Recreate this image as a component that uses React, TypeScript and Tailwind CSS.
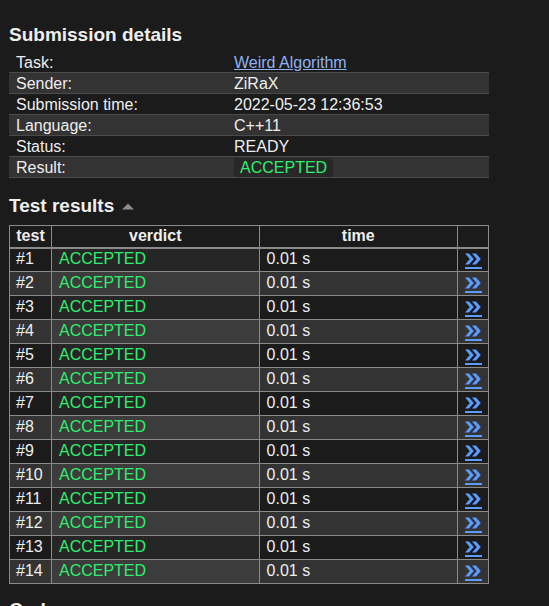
import React from 'react';

const info: [string, React.ReactNode][] = [
  ['Task:', <a href="#" className="text-[#8fb3f0] underline">Weird Algorithm</a>],
  ['Sender:', 'ZiRaX'],
  ['Submission time:', '2022-05-23 12:36:53'],
  ['Language:', 'C++11'],
  ['Status:', 'READY'],
  ['Result:', <span className="rounded-[3px] bg-[#282828] px-[6px] py-[1px] text-[#2fee6f]">ACCEPTED</span>],
];

function Chevrons() {
  return (
    <a href="#" className="inline-flex flex-col items-center">
      <svg width="16" height="14" viewBox="0 0 16 14" fill="#5b9bff">
        <path d="M0 1.5 L4 1.5 L8.8 7 L4 12.5 L0 12.5 L4.8 7 Z" />
        <path d="M7 1.5 L11 1.5 L15.8 7 L11 12.5 L7 12.5 L11.8 7 Z" />
      </svg>
      <span className="mt-[1px] block h-[2px] w-[17px] bg-[#5b9bff]" />
    </a>
  );
}

export default function App() {
  const rows = Array.from({ length: 14 }, (_, i) => i + 1);
  return (
    <div className="min-h-screen bg-[#1b1b1b] px-[9px] font-['Liberation_Sans',Arial,sans-serif] text-[16px] text-[#eeeeee]">
      <h2 className="pt-[23px] text-[19px] leading-[24px] font-bold">Submission details</h2>
      <div className="mt-[5px] w-[480px]">
        {info.map(([k, v], i) => (
          <div
            key={k}
            className={`flex h-[21px] items-center border-b border-[#4a4a4a] pt-[1px] leading-[18px] ${i % 2 ? 'bg-[#333333]' : ''}`}
          >
            <div className="w-[225px] pl-[7px]">{k}</div>
            <div>{v}</div>
          </div>
        ))}
      </div>

      <h2 className="mt-[16px] flex items-center text-[19px] leading-[24px] font-bold">
        Test results
        <svg className="ml-[8px]" width="12" height="7" viewBox="0 0 12 7">
          <path d="M0 6.5 L6 0.5 L12 6.5 Z" fill="#8a8a8a" />
        </svg>
      </h2>

      <table className="mt-[7px] w-[480px] border-collapse border border-[#8a8a8a] leading-[18px]">
        <thead>
          <tr className="h-[22px] border-b-2 border-[#8a8a8a] font-bold">
            <th className="w-[42px] border border-[#8a8a8a] pb-[1px] text-center">test</th>
            <th className="w-[208px] border border-[#8a8a8a] pb-[1px] text-center">verdict</th>
            <th className="w-[199px] border border-[#8a8a8a] pb-[1px] text-center">time</th>
            <th className="w-[31px] border border-[#8a8a8a]"></th>
          </tr>
        </thead>
        <tbody>
          {rows.map((n) => {
            const even = n % 2 === 0;
            const base = even ? 'bg-[#333333]' : 'bg-[#1b1b1b]';
            const mid = even ? 'bg-[#3c3c3c]' : 'bg-[#262626]';
            return (
              <tr key={n} className="h-[24px]">
                <td className={`border border-[#8a8a8a] pb-[1px] pl-[6px] ${base}`}>#{n}</td>
                <td className={`border border-[#8a8a8a] pb-[1px] pl-[7px] text-[#2fee6f] ${mid}`}>ACCEPTED</td>
                <td className={`border border-[#8a8a8a] pb-[1px] pl-[7px] ${base}`}>0.01 s</td>
                <td className={`border border-[#8a8a8a] pt-[2px] text-center ${base}`}>
                  <Chevrons />
                </td>
              </tr>
            );
          })}
        </tbody>
      </table>

      <h2 className="mt-[14px] pb-[20px] text-[19px] leading-[24px] font-bold">Code</h2>
    </div>
  );
}
